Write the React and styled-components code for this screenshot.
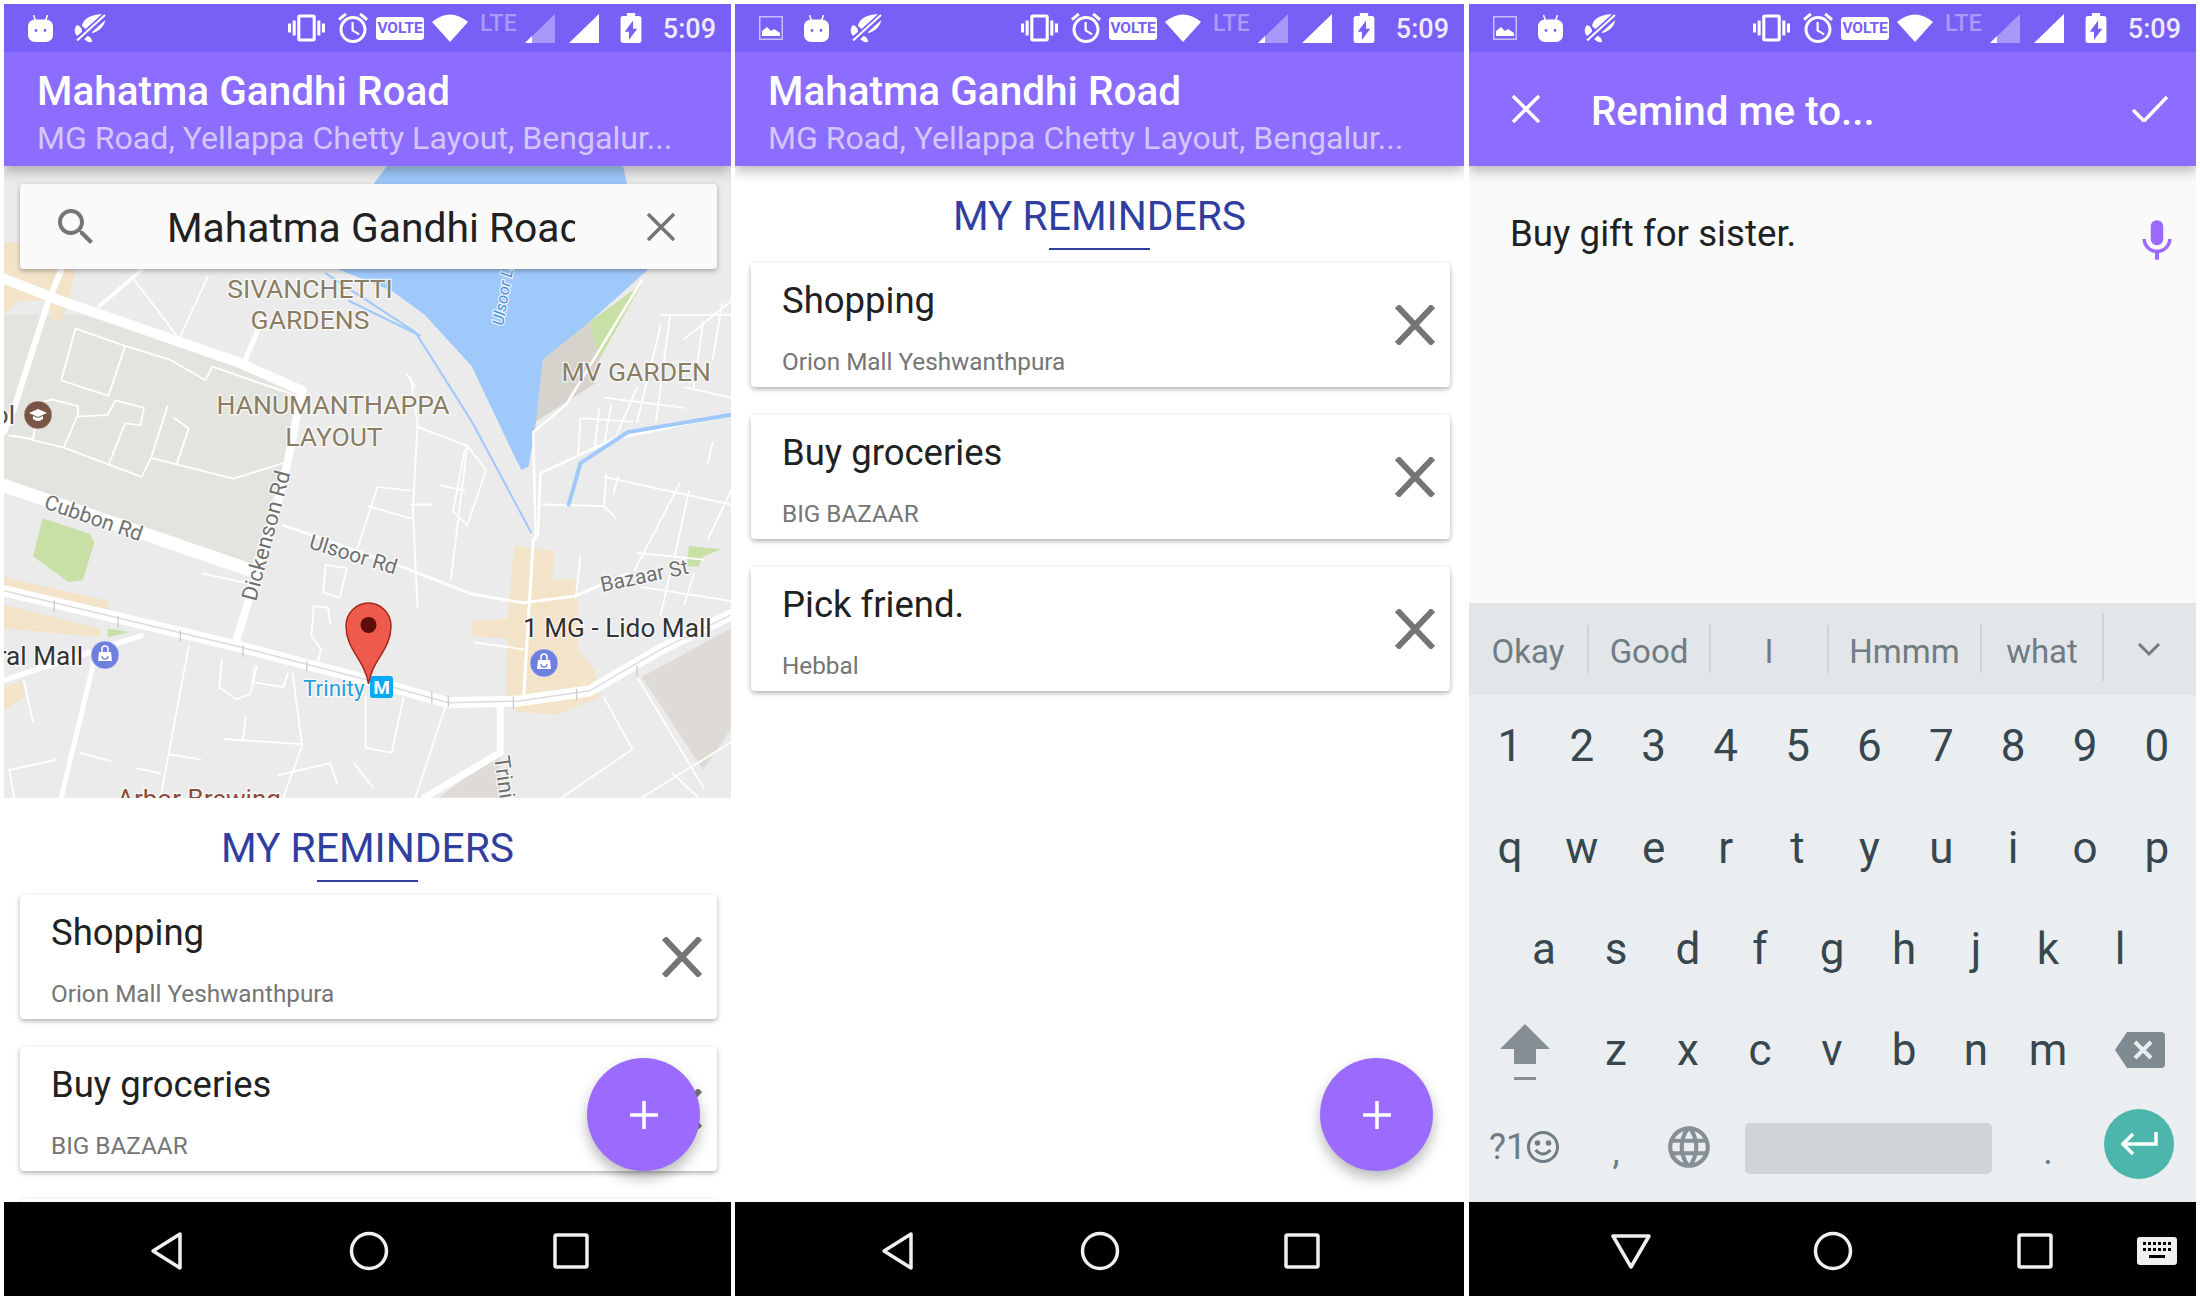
import React from "react";
import styled, { createGlobalStyle } from "styled-components";

const Global = createGlobalStyle`
  html, body { margin: 0; padding: 0; background: #fff; }
  body { font-family: Roboto, "Liberation Sans", sans-serif; }
  * { box-sizing: border-box; }
`;

const Page = styled.div`
  width: 2200px; height: 1300px; padding: 4px; display: flex; background: #fff; overflow: hidden;
`;
const Screen = styled.div`
  width: ${p => p.$w}px; margin-right: ${p => p.$mr || 0}px; height: 1292px; flex: none;
  display: flex; flex-direction: column; position: relative; overflow: hidden;
  background: ${p => p.$bg || "#fff"};
`;
const StatusBar = styled.div`
  height: 48px; flex: none; background: #785ff5; display: flex; align-items: center;
  padding: 0 15px 0 ${p => p.$pl || 24}px; position: relative; z-index: 3;
`;
const StatusLeft = styled.div`display: flex; align-items: center; gap: 21px;`;
const StatusRight = styled.div`display: flex; align-items: center; margin-left: auto;`;
const Glyph = styled.svg`display: block; flex: none; margin-left: ${p => p.$ml || 0}px; fill: ${p => p.$fill || "#fff"};`;
const Volte = styled.span`
  width: 48px; height: 23px; margin-left: 5px; background: #fff; border-radius: 3px; color: #785ff5;
  font: 700 15.5px/23px Roboto, sans-serif; text-align: center; letter-spacing: -.1px;
`;
const Lte = styled.span`
  margin-left: 12px; width: 35px; align-self: flex-start; margin-top: 2px; color: #a99bf9; font: 500 23px/24px Roboto, sans-serif;
`;
const Clock = styled.span`
  margin-left: 6px; padding-top: 2px; color: #efeaff; font: 500 27px/32px Roboto, sans-serif; width: 54px; text-align: right;
`;
const Header = styled.header`
  height: 114px; flex: none; background: #8c6dff; position: relative; z-index: 2;
  box-shadow: 0 5px 12px rgba(0,0,0,.28); padding: 14px 33px 0;
`;
const HeaderTitle = styled.div`color: #fff; font: 500 40.5px/50px Roboto, sans-serif; white-space: nowrap;`;
const HeaderSub = styled.div`color: #d3c6fb; font: 400 32.1px/45px Roboto, sans-serif; white-space: nowrap;`;
const EditBar = styled(Header)`
  display: flex; align-items: center; padding: 0 28px 0 42px;
`;
const EditTitle = styled.div`color: #fff; font: 500 40.3px/50px Roboto, sans-serif; margin-left: 50px; padding-top: 5px; flex: 1;`;
const Content = styled.main`flex: 1; min-height: 0; overflow: hidden; position: relative; display: flex; flex-direction: column;`;
const MapArea = styled.div`height: 632px; flex: none; position: relative; background: #ebebeb;`;
const MapSvg = styled.svg`display: block;`;
const SearchCard = styled.div`
  position: absolute; left: 16px; top: 18px; width: 697px; height: 85px; background: #fafafa; border-radius: 4px;
  box-shadow: 0 2px 5px rgba(0,0,0,.3); display: flex; align-items: center;
`;
const SearchGlyph = styled.svg`display: block; margin-left: 32px; fill: #757575; flex: none;`;
const SearchText = styled.div`
  width: 408px; margin-left: 67px; overflow: hidden; white-space: nowrap; color: #212121;
  font: 400 40.8px/50px Roboto, sans-serif; padding-top: 3px;
`;
const Heading = styled.div`
  height: 97px; flex: none; padding-top: 27px; display: flex; flex-direction: column; align-items: center;
  color: #303f9f; font: 400 40.8px/47px Roboto, sans-serif;
  &::after { content: ""; width: 101px; height: 2px; background: #303f9f; margin-top: 8px; }
`;
const CardList = styled.div`display: flex; flex-direction: column; gap: 28px; padding: 0 14px 0 16px;`;
const Card = styled.article`
  height: 124px; flex: none; background: #fff; border-radius: 4px; box-shadow: 0 2px 5px rgba(0,0,0,.32);
  display: flex; align-items: center; justify-content: space-between; padding: 17px 15px 0 31px;
`;
const CardText = styled.div`align-self: flex-start;`;
const CardTitle = styled.div`color: #212121; font: 400 36.5px/42px Roboto, sans-serif;`;
const CardSub = styled.div`color: #757575; font: 400 24.3px/28px Roboto, sans-serif; margin-top: 26px;`;
const CardClose = styled.svg`display: block; stroke: #757575; stroke-width: 6; fill: none; margin-top: -17px; flex: none;`;
const Fab = styled.div`
  position: absolute; right: 31px; top: 1054px; width: 113px; height: 113px; border-radius: 50%; background: #9b6bff;
  box-shadow: 0 7px 14px rgba(0,0,0,.28); display: flex; align-items: center; justify-content: center; z-index: 2;
`;
const NavBar = styled.nav`
  height: 94px; flex: none; background: #000; position: relative; z-index: 3; display: flex; align-items: center;
  padding-left: ${p => p.$pl}px; padding-top: 3px;
`;
const NavSlot = styled.div`
  width: ${p => p.$w}px; flex: none; display: flex; align-items: center; justify-content: center;
`;
const NavGlyph = styled.svg`display: block; fill: none; stroke: #f0f0f0; stroke-width: 3.5; stroke-linejoin: round;`;

const NoteArea = styled.div`
  height: 437px; flex: none; padding: 0 14px 0 41px; display: flex; justify-content: space-between; background: #fafafa;
`;
const NoteText = styled.div`color: #212121; font: 400 36.7px/42px Roboto, sans-serif; padding-top: 47px;`;
const Mic = styled.svg`display: block; fill: #9b6bff; margin-top: 50px;`;
const Keyboard = styled.section`flex: 1; background: #eaeef1; display: flex; flex-direction: column;`;
const Suggest = styled.div`height: 92px; flex: none; background: #e2e6e9; display: flex; align-items: center; position: relative;`;
const Word = styled.div`
  width: ${p => p.$w}px; flex: none; text-align: center; color: #6f7c83; font: 400 33px/40px Roboto, sans-serif;
  display: flex; align-items: center; justify-content: center; height: 48px; padding-top: 5px;
  border-right: 2px solid #cdd2d5;
`;
const WordLast = styled(Word)`height: 68px; margin-top: -4px; padding-top: 9px;`;
const Chevron = styled.svg`display: block; flex: none; margin-left: 32px; stroke: #6f7c83; stroke-width: 3; fill: none;`;
const KeyRow = styled.div`
  height: ${p => p.$h || 102}px; flex: none; display: flex; align-items: center; padding-left: ${p => p.$pl || 0}px;
`;
const Key = styled.div`
  width: ${p => p.$w || 72}px; flex: none; text-align: center; color: #37474f; font: 400 44px/102px Roboto, sans-serif;
  display: flex; justify-content: center; align-items: center;
`;
const FnKey = styled(Key)`color: #6f7c83; font-size: 36px; line-height: 48px; margin-bottom: ${p => p.$mb || 0}px;`;
const ShiftIcon = styled.svg`display: block; margin-top: 6px;`;
const Space = styled.div`width: 247px; height: 51px; margin: 0 20px 6px 19px; background: #cfd4d7; border-radius: 5px; flex: none;`;
const EnterKey = styled.div`
  width: 70px; height: 70px; border-radius: 50%; background: #4db6ac; margin: 0 0 16px 20px; flex: none;
  display: flex; align-items: center; justify-content: center;
`;

const Path = ({ d, size, ml, fill, w, h, stretch }) => (
  <Glyph $ml={ml} $fill={fill} width={w || size} height={h || size} viewBox="0 0 24 24" preserveAspectRatio={stretch ? "none" : undefined}><path d={d} /></Glyph>
);

const Droid = () => (
  <Glyph width="25" height="27" viewBox="0 0 25 27">
    <path d="M5.500 0 L7.500 6 M19.500 0 L17.500 6" stroke="#fff" strokeWidth="1.500" fill="none" />
    <rect x="0" y="4.500" width="25" height="22.500" rx="7" />
    <circle cx="8" cy="15.500" r="1.400" fill="#785ff5" /><circle cx="17" cy="15.500" r="1.400" fill="#785ff5" />
  </Glyph>
);
const Leaf = () => (
  <Glyph width="33" height="30" viewBox="0 0 33 30">
    <path d="M8 13 C9 5 18 1 31 1 C33 8 29 17 19 20 L14 18Z" />
    <path d="M3 12 C0 15 0 20 3 23 L8 19 C8 15 6 13 3 12Z" />
    <path d="M9 22 C9 26 13 30 18 29 C18 25 15 22 9 22Z" />
    <path d="M2 29 L33 1" stroke="#785ff5" strokeWidth="6.500" />
    <path d="M3 27.500 L31 2" stroke="#fff" strokeWidth="2" />
  </Glyph>
);
const ImgIcon = () => (
  <Glyph width="24" height="24" viewBox="0 0 24 24">
    <path fillRule="evenodd" d="M0 0H24V24H0ZM1.500 1.500V22.500H22.500V1.500Z" fill="#c9bdfb" />
    <path d="M3 20V15L8 11L12 15L15 13L21 17V20Z" />
  </Glyph>
);
const paths = {
  vib: "M0 15h2V9H0v6zm3 2h2V7H3v10zm19-8v6h2V9h-2zm-3 8h2V7h-2v10zM16.500 3h-9C6.670 3 6 3.670 6 4.500v15c0 .83.670 1.500 1.500 1.500h9c.83 0 1.500-.670 1.500-1.500v-15c0-.83-.670-1.500-1.500-1.500zM16 19H8V5h8v14z",
  alarm: "M22 5.720l-4.600-3.860-1.290 1.530 4.600 3.860L22 5.720zM7.880 3.390L6.600 1.860 2 5.710l1.290 1.530 4.590-3.850zM12.500 8H11v6l4.750 2.850.75-1.230-4-2.370V8zM12 4c-4.970 0-9 4.030-9 9s4.030 9 9 9 9-4.030 9-9-4.030-9-9-9zm0 16c-3.870 0-7-3.130-7-7s3.130-7 7-7 7 3.130 7 7-3.130 7-7 7z",
  batt: "M15.670 4H14V2h-4v2H8.330C7.600 4 7 4.600 7 5.330v15.330C7 21.400 7.600 22 8.330 22h7.330c.74 0 1.340-.6 1.340-1.330V5.330C17 4.600 16.400 4 15.670 4zM11 20v-5.500H9L13 7v5.500h2L11 20z",
  search: "M15.500 14h-.79l-.28-.27C15.410 12.590 16 11.110 16 9.500 16 5.910 13.090 3 9.500 3S3 5.910 3 9.500 5.910 16 9.500 16c1.610 0 3.090-.59 4.230-1.570l.27.28v.79l5 4.990L20.490 19l-4.990-5zm-6 0C7.010 14 5 11.990 5 9.500S7.010 5 9.500 5 14 7.010 14 9.500 11.990 14 9.500 14z",
  mic: "M12 14c1.660 0 3-1.340 3-3V5c0-1.660-1.340-3-3-3S9 3.340 9 5v6c0 1.660 1.340 3 3 3zm5.300-3c0 3-2.540 5.100-5.300 5.100S6.700 14 6.700 11H5c0 3.410 2.720 6.230 6 6.720V21h2v-3.280c3.280-.48 6-3.300 6-6.720h-1.700z",
  globe: "M11.990 2C6.470 2 2 6.480 2 12s4.470 10 9.990 10C17.520 22 22 17.520 22 12S17.520 2 11.990 2zm6.930 6h-2.950c-.32-1.250-.78-2.450-1.380-3.560 1.840.63 3.370 1.910 4.330 3.560zM12 4.040c.83 1.200 1.480 2.530 1.910 3.960h-3.820c.43-1.430 1.080-2.760 1.910-3.960zM4.260 14C4.100 13.360 4 12.690 4 12s.1-1.360.26-2h3.380c-.08.66-.14 1.320-.14 2 0 .68.06 1.340.14 2H4.260zm.82 2h2.950c.32 1.250.78 2.450 1.380 3.560-1.840-.63-3.370-1.900-4.330-3.560zm2.950-8H5.080c.96-1.660 2.490-2.930 4.330-3.560C8.810 5.550 8.350 6.750 8.030 8zM12 19.960c-.83-1.200-1.480-2.530-1.910-3.960h3.820c-.43 1.430-1.080 2.760-1.910 3.960zM14.340 14H9.660c-.09-.66-.16-1.320-.16-2 0-.68.07-1.350.16-2h4.680c.09.65.16 1.320.16 2 0 .68-.07 1.340-.16 2zm.25 5.560c.6-1.110 1.060-2.310 1.380-3.560h2.950c-.96 1.650-2.490 2.930-4.330 3.560zM16.360 14c.08-.66.14-1.320.14-2 0-.68-.06-1.340-.14-2h3.380c.16.64.26 1.310.26 2s-.1 1.360-.26 2h-3.380z",
};

const Status = ({ image }) => (
  <StatusBar>
    <StatusLeft>
      {image && <ImgIcon />}
      <Droid />
      <Leaf />
    </StatusLeft>
    <StatusRight>
      <Path d={paths.vib} w={37} h={36} stretch />
      <Path d={paths.alarm} size={36} ml={10} />
      <Volte>VOLTE</Volte>
      <Glyph $ml={8} width="36" height="28" viewBox="0 0 36 28"><path d="M0 8 Q18 -7 36 8 L18 28Z" /></Glyph>
      <Lte>LTE</Lte>
      <Glyph $ml={10} width="30" height="29" viewBox="0 0 30 29">
        <path d="M30 0V29H0Z" fill="#a898fa" /><path d="M7 22V29H0Z" />
      </Glyph>
      <Glyph $ml={14} width="30" height="29" viewBox="0 0 30 29"><path d="M30 0V29H0Z" /></Glyph>
      <Path d={paths.batt} w={50} h={36} ml={7} stretch />
      <Clock>5:09</Clock>
    </StatusRight>
  </StatusBar>
);

const AppHeader = () => (
  <Header>
    <HeaderTitle>Mahatma Gandhi Road</HeaderTitle>
    <HeaderSub>MG Road, Yellappa Chetty Layout, Bengalur...</HeaderSub>
  </Header>
);

const Reminder = ({ title, sub }) => (
  <Card>
    <CardText>
      <CardTitle>{title}</CardTitle>
      <CardSub>{sub}</CardSub>
    </CardText>
    <CardClose width="40" height="40" viewBox="0 0 40 40"><path d="M2 1 L38 39 M38 1 L2 39" /></CardClose>
  </Card>
);

const reminders = [
  ["Shopping", "Orion Mall Yeshwanthpura"],
  ["Buy groceries", "BIG BAZAAR"],
  ["Pick friend.", "Hebbal"],
];
const Reminders = () => (
  <>
    <Heading>MY REMINDERS</Heading>
    <CardList>{reminders.map(r => <Reminder key={r[0]} title={r[0]} sub={r[1]} />)}</CardList>
  </>
);

const Plus = () => (
  <svg width="30" height="30" viewBox="0 0 30 30"><path d="M15 1V29M1 15H29" stroke="#fff" strokeWidth="3.500" /></svg>
);

const Nav = ({ pl, down, kb }) => (
  <NavBar $pl={pl}>
    <NavSlot $w={202}>
      <NavGlyph width="40" height="40" viewBox="0 0 40 40">
        {down ? <path d="M2 5H38L20 36Z" /> : <path d="M33 3V37L6 20Z" />}
      </NavGlyph>
    </NavSlot>
    <NavSlot $w={202}>
      <NavGlyph width="40" height="40" viewBox="0 0 40 40"><circle cx="20" cy="20" r="17.500" /></NavGlyph>
    </NavSlot>
    <NavSlot $w={202}>
      <NavGlyph width="36" height="36" viewBox="0 0 36 36"><rect x="2" y="2" width="32" height="32" rx="1.500" /></NavGlyph>
    </NavSlot>
    {kb && (
      <NavSlot $w={42}>
        <svg width="40" height="28" viewBox="0 0 40 28">
          <rect width="40" height="28" rx="3" fill="#f0f0f0" />
          {[0,1,2,3,4,5].map(i => <rect key={i} x={6+i*5} y="5" width="3" height="3" fill="#000" />)}
          {[0,1,2,3,4,5].map(i => <rect key={i} x={6+i*5} y="11" width="3" height="3" fill="#000" />)}
          <rect x="12" y="18" width="16" height="3" fill="#000" />
        </svg>
      </NavSlot>
    )}
  </NavBar>
);

/* ---- map drawing ---- */
const mx = x => (x / 2.119).toFixed(1);
const my = y => (270 + y / 2.9).toFixed(1);
const pts = a => a.map(([x, y]) => `${mx(x)},${my(y)}`).join(" ");

const Poly = ({ a, c }) => <polygon points={pts(a)} fill={c} />;
const Line = ({ a, w = 2, c = "#fff" }) => (
  <polyline points={pts(a)} fill="none" stroke={c} strokeWidth={w} strokeLinejoin="round" strokeLinecap="round" />
);

const MapLabel = styled.text`
  font-family: Roboto, sans-serif; font-size: ${p => p.$s}px; fill: ${p => p.$c};
  paint-order: stroke; stroke: rgba(255,255,255,.75); stroke-width: 2.5px; font-style: ${p => p.$i ? "italic" : "normal"};
`;

const minor = [
  [[160,170],[130,320],[230,365],[265,220],[160,170]],
  [[265,220],[360,260],[435,320],[450,280]],
  [[450,280],[640,370]],
  [[30,480],[135,515],[300,600],[320,545],[495,605],[600,560]],
  [[135,515],[165,420],[165,395],[110,375],[70,390]],
  [[230,565],[265,445],[298,450],[305,400],[245,378],[228,420],[165,425]],
  [[320,545],[355,395]],
  [[370,430],[400,460],[375,560]],
  [[20,480],[70,490],[75,450]],
  [[870,310],[885,440],[875,700],[885,980]],
  [[885,455],[990,510],[955,900]],
  [[990,510],[1030,580],[990,740],[960,700],[985,520]],
  [[800,630],[870,640]], [[800,630],[750,840]], [[780,685],[870,720]], [[870,680],[915,680]], [[935,625],[985,640]],
  [[690,855],[735,865],[720,950],[685,935],[690,855]],
  [[665,975],[695,980],[700,1025]], [[665,975],[660,1060],[680,1100],[670,1160]],
  [[430,880],[530,910]], [[1005,1080],[1110,1100]],
  [[1150,680],[1280,685],[1305,720]], [[1280,600],[1549,680]], [[1285,590],[1280,680]], [[1310,600],[1300,650]],
  [[1400,160],[1350,440]], [[1400,130],[1549,130]], [[1420,130],[1390,440]], [[1235,430],[1340,440]],
  [[1230,430],[1225,540]], [[1270,400],[1260,520]], [[1295,395],[1280,505]], [[1350,340],[1300,500]],
  [[1280,370],[1450,400]], [[1450,340],[1549,370]], [[1450,200],[1549,90]], [[1490,150],[1470,340]],
  [[1530,100],[1510,260]], [[1230,830],[1220,950]], [[1345,870],[1440,620]], [[1350,820],[1490,840]],
  [[1430,830],[1460,640]], [[1500,780],[1549,640]], [[1360,920],[1549,960]], [[1420,880],[1400,1000]],
  [[1470,880],[1450,970]], [[1510,500],[1500,560]],
  [[400,1090],[340,1530]], [[470,1130],[465,1210],[500,1245],[530,1230],[545,1150]],
  [[540,1150],[535,1195],[600,1210],[610,1170]], [[20,1450],[120,1420]], [[360,1405],[425,1420]], [[290,1445],[340,1460]],
  [[475,1360],[640,1375],[620,1170]], [[520,1300],[515,1360]], [[590,1465],[700,1430],[715,1490]], [[640,1380],[600,1530]],
  [[775,1235],[775,1385],[830,1400],[855,1240]], [[945,1260],[880,1530]], [[1280,1240],[1340,1390],[1190,1530]],
  [[1350,1180],[1490,1500]], [[1425,1460],[1480,1530]], [[1360,1530],[1549,1370]], [[750,1430],[790,1500]],
  [[50,1190],[70,1310]], [[20,1450],[30,1530]], [[170,1400],[235,1425]],
  [[280,20],[380,200]], [[440,20],[380,200]], [[860,300],[880,340]],
];
const mainRoad = [[8,930],[500,1090],[780,1190],[950,1255],[1100,1250],[1250,1220],[1400,1100],[1549,1000]];
const ticks = [[115,975],[250,1020],[382,1062],[515,1105],[650,1150],[915,1240],[950,1250],[1088,1255],[1222,1232],[1350,1165]];

const Shop = ({ x, y }) => (
  <g transform={`translate(${x} ${y})`}>
    <circle r="14" fill="#6e7fdd" stroke="#fff" strokeOpacity=".4" />
    <path d="M-6 -3H6L7 6H-7Z" fill="#fff" />
    <path d="M-3 -3V-6A3 3 0 0 1 3 -6V-3" stroke="#fff" strokeWidth="1.500" fill="none" />
    <path d="M-3 1A3 3 0 0 0 3 1" stroke="#6e7fdd" strokeWidth="1.300" fill="none" />
  </g>
);

const MapDrawing = () => (
  <MapSvg width="727" height="632" viewBox="4 166 727 632">
    <rect x="4" y="166" width="727" height="632" fill="#ebebeb" />
    <Poly c="#e3e4df" a={[[8,130],[180,130],[500,270],[630,360],[600,560],[530,870],[8,620]]} />
    <Poly c="#f3e3c9" a={[[8,-80],[170,-80],[150,70],[130,150],[110,140],[100,90],[40,90],[8,130]]} />
    <Poly c="#f3e3c9" a={[[8,890],[230,960],[230,985],[8,920]]} />
    <Poly c="#f3e3c9" a={[[8,970],[210,1040],[210,1065],[8,1040]]} />
    <Poly c="#f3e3c9" a={[[8,1210],[50,1190],[50,1240],[8,1280]]} />
    <Poly c="#f3e3c9" a={[[1090,800],[1175,815],[1170,900],[1225,895],[1225,1100],[1260,1160],[1270,1240],[1180,1290],[1095,1280],[1070,1230],[1075,1070],[1000,1060],[1000,1020],[1075,1010]]} />
    <Poly c="#c8e0a6" a={[[90,720],[190,765],[200,790],[175,900],[145,905],[70,830]]} />
    <Poly c="#d6d2cc" a={[[1150,260],[1250,150],[1270,260],[1260,330],[1135,440]]} />
    <Poly c="#c8e0a6" a={[[1250,150],[1360,40],[1270,260]]} />
    <Poly c="#c8e0a6" a={[[1460,800],[1530,810],[1490,830],[1480,860],[1455,860]]} />
    <Poly c="#c8e0a6" a={[[228,1040],[275,1050],[228,1065]]} />
    <Poly c="#dedad5" a={[[1360,1180],[1549,1040],[1549,1330],[1490,1450]]} />
    <Poly c="#dedad5" a={[[930,1530],[1060,1400],[1060,1530]]} />
    <Poly c="#a0c9fb" a={[[820,-301],[1320,-301],[1372,0],[1250,150],[1150,260],[1135,450],[1120,570],[1105,580],[1090,540],[1000,280],[900,130],[830,60],[720,0],[680,-50]]} />
    {minor.map((a, i) => <Line key={i} a={a} w={1.8} />)}
    <Line a={[[8,25],[130,90],[500,265],[640,350]]} w={10} />
    <Line a={[[8,625],[530,870]]} w={13} />
    <Line a={[[640,350],[600,620],[500,1080]]} w={8} />
    <Line a={[[130,0],[100,100],[30,400],[8,470]]} w={6} />
    <Line a={[[300,0],[210,105]]} w={4} />
    <Line a={[[560,130],[520,260]]} w={5} />
    <Line a={[[8,1190],[300,1060]]} w={5} />
    <Line a={[[200,1130],[130,1530]]} w={5} />
    <Line a={[[1060,1270],[1060,1400],[900,1530]]} w={7} />
    <Line a={[[600,740],[850,860],[1000,940],[1110,965],[1220,945],[1330,880]]} w={3} />
    <Line a={[[1130,780],[1110,1230]]} w={3} />
    <Line a={[[1140,770],[1145,590],[1300,490],[1549,420]]} w={2.500} />
    <Line a={[[1135,780],[1130,470],[1200,390],[1360,30]]} w={2.500} />
    <Line a={mainRoad} w={11} />
    <Line a={mainRoad} w={1.500} c="#dcdcdc" />
    {ticks.map(([x, y]) => <Line key={x} a={[[x, y - 16], [x, y + 16]]} w={1.200} c="#c8c8c8" />)}
    <Line a={[[690,10],[880,180],[1000,440],[1125,760]]} w={2} c="#a0c9fb" />
    <Line a={[[740,90],[890,190]]} w={2} c="#a0c9fb" />
    <Line a={[[1205,680],[1230,560],[1330,470],[1549,420]]} w={4} c="#a0c9fb" />

    <MapLabel x="310" y="298" textAnchor="middle" $s={26.5} $c="#8a7d63">SIVANCHETTI</MapLabel>
    <MapLabel x="310" y="329" textAnchor="middle" $s={26.5} $c="#8a7d63">GARDENS</MapLabel>
    <MapLabel x="333" y="414" textAnchor="middle" $s={26.5} $c="#8a7d63">HANUMANTHAPPA</MapLabel>
    <MapLabel x="334" y="446" textAnchor="middle" $s={26.5} $c="#8a7d63">LAYOUT</MapLabel>
    <MapLabel x="711" y="381" textAnchor="end" $s={26.5} $c="#8a7d63">MV GARDEN</MapLabel>
    <MapLabel transform="rotate(19 43 508)" x="43" y="508" $s={21} $c="#707070">Cubbon Rd</MapLabel>
    <MapLabel transform="rotate(-75 256 602)" x="256" y="602" $s={22} $c="#707070">Dickenson Rd</MapLabel>
    <MapLabel transform="rotate(17 308 548)" x="308" y="548" $s={21} $c="#707070">Ulsoor Rd</MapLabel>
    <MapLabel transform="rotate(-12 602 592)" x="602" y="592" $s={21} $c="#707070">Bazaar St</MapLabel>
    <MapLabel transform="rotate(-80 503 326)" x="503" y="326" $s={16} $c="#4a90d9" $i>Ulsoor Lake</MapLabel>
    <MapLabel x="523" y="637" $s={26.2} $c="#333">1 MG - Lido Mall</MapLabel>
    <MapLabel x="83" y="665" textAnchor="end" $s={26.2} $c="#333">Central Mall</MapLabel>
    <MapLabel x="15" y="424" textAnchor="end" $s={26} $c="#4e4e4e">School</MapLabel>
    <MapLabel x="117" y="808" $s={26} $c="#8d4a3a">Arbor Brewing</MapLabel>
    <MapLabel transform="rotate(82 494 757)" x="494" y="757" $s={22} $c="#707070">Trinity Church Rd</MapLabel>

    <g transform="translate(38 415)">
      <circle r="14" fill="#795548" stroke="#fff" strokeOpacity=".4" />
      <path d="M-9 -2L0 -6L9 -2L0 2Z" fill="#fff" />
      <path d="M-5 1V4Q0 8 5 4V1L0 3Z" fill="#fff" />
    </g>
    <Shop x={105} y={655} />
    <Shop x={544} y={663} />
    <MapLabel x="303" y="696" $s={22.5} $c="#2a9fd8">Trinity</MapLabel>
    <rect x="370" y="676" width="23" height="22" rx="3" fill="#03a9f4" />
    <path d="M368.500 684 C365 660 346 650 346 626 A22.500 23 0 0 1 391 626 C391 650 372 660 368.500 684Z" fill="#ee5a4b" stroke="#a5281c" strokeWidth="1.500" />
    <circle cx="368.500" cy="625" r="8" fill="#5c0f08" />
    <text x="381.500" y="694" textAnchor="middle" fontFamily="Roboto, sans-serif" fontWeight="700" fontSize="19" fill="#fff">M</text>
  </MapSvg>
);

const Screen1 = () => (
  <Screen $w={727} $mr={4}>
    <Status />
    <AppHeader />
    <Content>
      <MapArea>
        <MapDrawing />
        <SearchCard>
          <SearchGlyph width="48" height="48" viewBox="0 0 24 24"><path d={paths.search} /></SearchGlyph>
          <SearchText>Mahatma Gandhi Road</SearchText>
          <Glyph $ml={71} width="30" height="28" viewBox="0 0 30 28"><path d="M2 1 L28 27 M28 1 L2 27" stroke="#757575" strokeWidth="3.500" fill="none" /></Glyph>
        </SearchCard>
      </MapArea>
      <Reminders />
    </Content>
    <Fab><Plus /></Fab>
    <Nav pl={62} />
  </Screen>
);

const Screen2 = () => (
  <Screen $w={729} $mr={5}>
    <Status image />
    <AppHeader />
    <Content><Reminders /></Content>
    <Fab><Plus /></Fab>
    <Nav pl={62} />
  </Screen>
);

const row1 = "1234567890".split("");
const row2 = "qwertyuiop".split("");
const row3 = "asdfghjkl".split("");
const row4 = "zxcvbnm".split("");

const Screen3 = () => (
  <Screen $w={727} $bg="#fafafa">
    <Status image />
    <EditBar>
      <Glyph width="30" height="28" viewBox="0 0 30 28"><path d="M2 1 L28 27 M28 1 L2 27" stroke="#fff" strokeWidth="3.500" fill="none" /></Glyph>
      <EditTitle>Remind me to...</EditTitle>
      <Glyph width="36" height="26" viewBox="0 0 36 26"><path d="M1 14 L12 25 L35 1" stroke="#fff" strokeWidth="3.500" fill="none" /></Glyph>
    </EditBar>
    <NoteArea>
      <NoteText>Buy gift for sister.</NoteText>
      <Mic width="50" height="50" viewBox="0 0 24 24"><path d={paths.mic} /></Mic>
    </NoteArea>
    <Keyboard>
      <Suggest>
        <Word $w={120}>Okay</Word>
        <Word $w={122}>Good</Word>
        <Word $w={118}>I</Word>
        <Word $w={153}>Hmmm</Word>
        <WordLast $w={122}>what</WordLast>
        <Chevron width="26" height="16" viewBox="0 0 26 16"><path d="M3 3 L13 13 L23 3" /></Chevron>
      </Suggest>
      <KeyRow $pl={5}>{row1.map(k => <Key key={k} $w={71.9}>{k}</Key>)}</KeyRow>
      <KeyRow $pl={5} $h={101}>{row2.map(k => <Key key={k} $w={71.9}>{k}</Key>)}</KeyRow>
      <KeyRow $pl={39} $h={101}>{row3.map(k => <Key key={k}>{k}</Key>)}</KeyRow>
      <KeyRow>
        <Key $w={111}>
          <ShiftIcon width="50" height="58" viewBox="0 0 50 58">
            <path d="M25 0 L50 25 H36 V40 H14 V25 H0Z" fill="#869094" />
            <rect x="14" y="53" width="22" height="3" fill="#869094" />
          </ShiftIcon>
        </Key>
        {row4.map(k => <Key key={k}>{k}</Key>)}
        <Key $w={112}>
          <svg width="50" height="36" viewBox="0 0 50 36">
            <path d="M12 0H46Q50 0 50 4V32Q50 36 46 36H12L0 18Z" fill="#7f8b90" />
            <path d="M20 10 L36 26 M36 10 L20 26" stroke="#eaeef1" strokeWidth="4" />
          </svg>
        </Key>
      </KeyRow>
      <KeyRow $h={101}>
        <FnKey $w={111} $mb={10}>
          ?1
          <svg width="34" height="34" viewBox="0 0 34 34" fill="none" stroke="#6f7c83" strokeWidth="3">
            <circle cx="17" cy="17" r="14.500" />
            <circle cx="11.500" cy="13" r="1.300" fill="#6f7c83" /><circle cx="22.500" cy="13" r="1.300" fill="#6f7c83" />
            <path d="M9.500 20 Q17 28 24.500 20" />
          </svg>
        </FnKey>
        <FnKey>,</FnKey>
        <FnKey $w={74} $mb={10}><Path d={paths.globe} size={50} fill="#869094" /></FnKey>
        <Space />
        <FnKey>.</FnKey>
        <EnterKey>
          <svg width="38" height="30" viewBox="0 0 38 30" fill="none" stroke="#fff" strokeWidth="3.500">
            <path d="M36 3 V15 H3 M13 5 L3 15 L13 25" />
          </svg>
        </EnterKey>
      </KeyRow>
    </Keyboard>
    <Nav pl={61} down kb />
  </Screen>
);

export default function App() {
  return (
    <Page>
      <Global />
      <Screen1 />
      <Screen2 />
      <Screen3 />
    </Page>
  );
}
